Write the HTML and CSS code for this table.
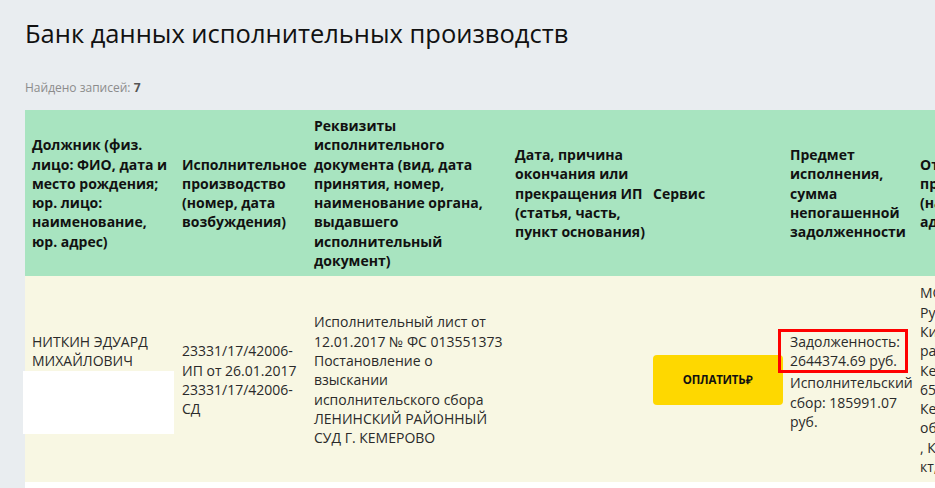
FILE: index.html
```html
<!DOCTYPE html>
<html lang="ru">
<head>
<meta charset="utf-8">
<title>Банк данных исполнительных производств</title>
<link rel="stylesheet" href="styles.css">
</head>
<body>
<div class="page">
  <h1 class="title">Банк данных исполнительных производств</h1>
  <div class="found">Найдено записей: <b>7</b></div>
  <div class="table-wrap">
    <table class="results">
      <colgroup>
        <col class="c1"><col class="c2"><col class="c3"><col class="c4"><col class="c5"><col class="c6"><col class="c7">
      </colgroup>
      <thead>
        <tr>
          <th>Должник (физ. лицо: ФИО, дата и место рождения; юр. лицо: наименование, юр. адрес)</th>
          <th>Исполнительное производство (номер, дата возбуждения)</th>
          <th>Реквизиты исполнительного документа (вид, дата принятия, номер, наименование органа, выдавшего исполнительный документ)</th>
          <th>Дата, причина окончания или прекращения ИП (статья, часть, пункт основания)</th>
          <th>Сервис</th>
          <th>Предмет исполнения, сумма непогашенной задолженности</th>
          <th>Отдел судебных приставов (наименование, адрес)</th>
        </tr>
      </thead>
      <tbody>
        <tr class="row-main">
          <td>НИТКИН ЭДУАРД МИХАЙЛОВИЧ<div class="redact"></div></td>
          <td>23331/17/42006-ИП от 26.01.2017 23331/17/42006-СД</td>
          <td>Исполнительный лист от 12.01.2017 № ФС 013551373 Постановление о взыскании исполнительского сбора ЛЕНИНСКИЙ РАЙОННЫЙ СУД Г. КЕМЕРОВО</td>
          <td></td>
          <td><a class="pay" href="#">ОПЛАТИТЬ<span class="rub">₽</span></a></td>
          <td><div class="debt">Задолженность: 2644374.69 руб.</div>Исполнительский сбор: 185991.07 руб.</td>
          <td>МОСП по<br>Рудничному и<br>Кировскому<br>районам г.<br>Кемерово<br>650000, Россия,<br>Кемеровская<br>обл.<br>, Кемерово г., пр-<br>кт, Ленина, 1</td>
        </tr>
        <tr class="row-next">
          <td></td><td></td><td></td><td></td><td></td><td></td><td></td>
        </tr>
      </tbody>
    </table>
  </div>
</div>
</body>
</html>
```

FILE: styles.css
```css
html, body {
  margin: 0;
  padding: 0;
  background: #e9edf0;
  overflow: hidden;
}

.page {
  padding: 15px 0 0 25px;
  font-family: "Open Sans", "Liberation Sans", sans-serif;
  color: #222;
}

.title {
  margin: 0;
  font-size: 25.5px;
  line-height: 36px;
  font-weight: 400;
  color: #111;
}

.found {
  margin-top: 29px;
  font-size: 12px;
  line-height: 16px;
  color: #8c8c8c;
}

.found b {
  color: #555;
}

.table-wrap {
  margin-top: 14px;
}

.results {
  table-layout: fixed;
  width: 1018px;
  border-collapse: collapse;
  font-size: 14px;
  line-height: 19.3px;
}

.c1 { width: 150px; }
.c2 { width: 132px; }
.c3 { width: 201px; }
.c4 { width: 138px; }
.c5 { width: 137px; }
.c6 { width: 130px; }
.c7 { width: 130px; }

.results th,
.results td {
  box-sizing: border-box;
  padding: 6px 0 6px 7px;
  vertical-align: middle;
  text-align: left;
}

.results th {
  background: #a8e4c0;
  color: #111;
  font-weight: 700;
}

.row-main td {
  background: #f8f7e3;
  color: #2a2a2a;
  padding-top: 7px;
  padding-bottom: 6px;
}

.row-next td {
  background: #ffffff;
  height: 30px;
}

.redact {
  width: 151px;
  height: 63px;
  margin-left: -9px;
  margin-bottom: -6px;
  background: #ffffff;
}

.pay {
  display: flex;
  align-items: center;
  justify-content: center;
  width: 130px;
  height: 50px;
  box-sizing: border-box;
  background: #fed800;
  border-radius: 4px;
  color: #111;
  font-size: 11.5px;
  font-weight: 700;
  text-decoration: none;
  letter-spacing: -0.2px;
}

.rub {
  margin-left: 1px;
}

.debt {
  margin-left: -12px;
  padding: 0 6px 0 9px;
  border: 3px solid #ff0000;
  width: 130px;
  box-sizing: border-box;
}
```
